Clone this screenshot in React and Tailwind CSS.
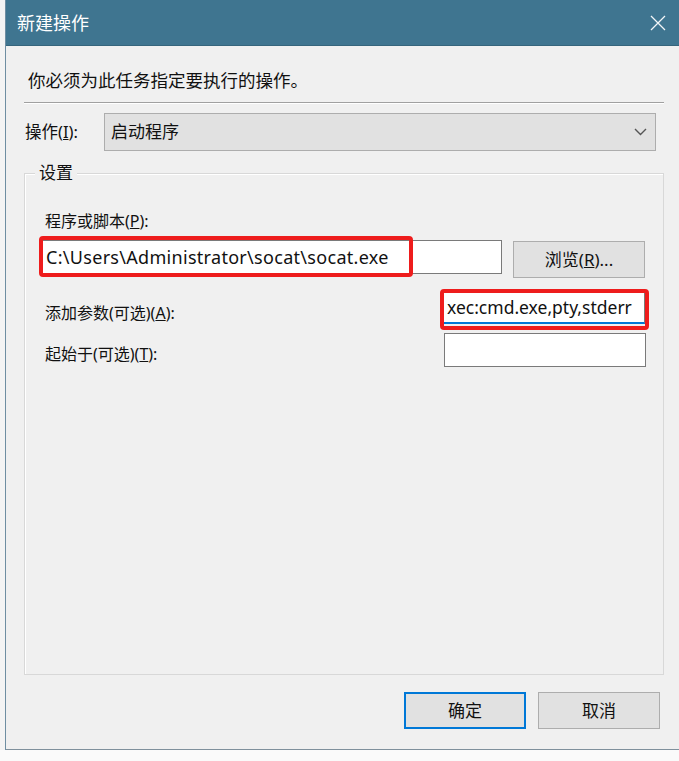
import React from 'react';

const FONT = { fontFamily: '"Noto Sans", "Noto Sans CJK SC", sans-serif' };

function Field({ className = '', children }) {
  return (
    <div className={`h-[34px] bg-white border border-[#7a7a7a] flex items-center overflow-hidden ${className}`}>
      {children}
    </div>
  );
}

function Btn({ children, primary }) {
  return (
    <div
      className={`w-[122px] h-[37px] flex items-center justify-center bg-[#e1e1e1] text-[17px] text-[#111] ${
        primary ? 'border-2 border-[#0078d7]' : 'border border-[#adadad]'
      }`}
    >
      {children}
    </div>
  );
}

export default function App() {
  return (
    <div className="w-[679px] h-[761px] bg-[#f8f8f8] flex flex-col overflow-hidden" style={FONT}>
      <div className="flex h-[750px]">
        <div className="w-[5px] bg-[#f4f4f4]" />
        <div className="flex-1 flex flex-col border-l border-[#6f8ea2]">
          {/* 标题栏 */}
          <div className="h-[46px] bg-[#3f7590] border-b border-[#35657c] flex items-center justify-between pl-[11px] pr-[13px]">
            <span className="text-white text-[18px] leading-none">新建操作</span>
            <svg width="16" height="16" viewBox="0 0 16 16" aria-hidden="true">
              <path d="M1 1 L15 15 M15 1 L1 15" stroke="#f2f6f8" strokeWidth="1.3" fill="none" />
            </svg>
          </div>

          {/* 主体 */}
          <div className="flex-1 bg-[#f0f0f0] border-b border-[#7f909c] flex flex-col text-[#111]">
            <p className="pl-[22px] pt-[22px] text-[17.5px] leading-[24px]">你必须为此任务指定要执行的操作。</p>

            <div className="ml-[18px] mr-[15px] mt-[10px] h-[2px] border-t border-[#a0a0a0] border-b border-b-white" />

            <div className="flex items-center ml-[19px] mr-[23px] mt-[9px]">
              <span className="w-[79px] text-[16.5px]">
                操作(<u>I</u>):
              </span>
              <div className="flex-1 h-[38px] bg-[#e1e1e1] border border-[#adadad] flex items-center justify-between pl-[6px] pr-[8px]">
                <span className="text-[17px]">启动程序</span>
                <svg width="13" height="8" viewBox="0 0 13 8" aria-hidden="true">
                  <path d="M1 1 L6.5 6.5 L12 1" stroke="#555" strokeWidth="1.4" fill="none" />
                </svg>
              </div>
            </div>

            {/* 设置 分组框 */}
            <div className="relative ml-[18px] mr-[15px] mt-[22px] h-[502px] border border-[#d8d8d8] shadow-[inset_1px_1px_0_#fff]">
              <span className="absolute -top-[13px] left-[10px] bg-[#f0f0f0] px-[4px] text-[17px] leading-[24px]">设置</span>

              <div className="pl-[15px] pr-[17px] pt-[36px]">
                <p className="pl-[5px] text-[16px] leading-[22px]">
                  程序或脚本(<u>P</u>):
                </p>

                <div className="flex items-start gap-[11px] mt-[8px]">
                  <div className="relative">
                    <Field className="w-[462px] pl-[5px]">
                      <span className="text-[18px] tracking-[0.3px] whitespace-nowrap">C:\Users\Administrator\socat\socat.exe</span>
                    </Field>
                    <div className="absolute -left-[1px] -top-[4px] w-[374px] h-[41px] border-[4px] border-[#ee1c1c] rounded-[4px]" />
                  </div>
                  <div className="mt-[1px] w-[132px] h-[37px] bg-[#e1e1e1] border border-[#adadad] flex items-center justify-center text-[17px]">
                    浏览(<u>R</u>)...
                  </div>
                </div>

                <div className="flex items-start justify-between mt-[14px]">
                  <span className="pl-[5px] mt-[10px] text-[16px] leading-[22px]">
                    添加参数(可选)(<u>A</u>):
                  </span>
                  <div className="relative mr-[1px]">
                    <div className="w-[202px] h-[32px] bg-white border border-[#7a7a7a] border-b-2 border-b-[#0078d7] flex items-center overflow-hidden pl-[3px]">
                      <span className="text-[17.5px] whitespace-nowrap">xec:cmd.exe,pty,stderr</span>
                    </div>
                    <div className="absolute -left-[3px] -top-[3px] w-[209px] h-[41px] border-[4px] border-[#ee1c1c] rounded-[4px]" />
                  </div>
                </div>

                <div className="flex items-start justify-between mt-[9px]">
                  <span className="pl-[5px] mt-[10px] text-[16px] leading-[22px]">
                    起始于(可选)(<u>T</u>):
                  </span>
                  <Field className="w-[202px]" />
                </div>
              </div>
            </div>

            <div className="flex justify-end gap-[12px] mt-[17px] mr-[19px]">
              <Btn primary>确定</Btn>
              <Btn>取消</Btn>
            </div>
          </div>
        </div>
      </div>
      <div className="flex-1 bg-[#fafafa]" />
    </div>
  );
}
